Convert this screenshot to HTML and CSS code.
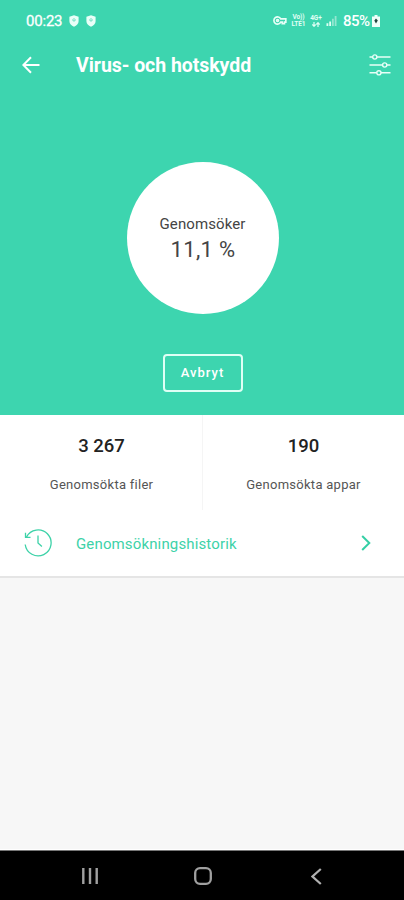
FILE: index.html
```html
<!DOCTYPE html>
<html lang="sv">
<head>
<meta charset="utf-8">
<title>Virus- och hotskydd</title>
<link rel="stylesheet" href="styles.css">
</head>
<body>
<div class="screen">
  <header class="hero">
    <div class="status">
      <span class="clock">00:23</span>
      <svg class="shield" width="10" height="12" viewBox="0 0 10 12"><path d="M5 .3 9.6 1.8V6c0 2.8-2 4.7-4.6 5.8C2.400 10.700.4 8.800.4 6V1.800Z" fill="#e9fff8"/><path d="M3 4.500 5 6.400 7 4.500M5 3v3" fill="none" stroke="#74dfc4" stroke-width="1"/></svg>
      <svg class="shield second" width="10" height="12" viewBox="0 0 10 12"><path d="M5 .3 9.6 1.8V6c0 2.8-2 4.7-4.6 5.8C2.400 10.700.4 8.800.4 6V1.800Z" fill="#e9fff8"/><path d="M3 4.500 5 6.400 7 4.500M5 3v3" fill="none" stroke="#74dfc4" stroke-width="1"/></svg>
      <div class="signals">
        <svg width="14" height="9" viewBox="0 0 15 10" fill="none" stroke="#e9fff8" stroke-width="1.800"><path d="M8.300 3.200A4 4 0 1 0 8.300 6.800H10V8.500H12.500V6.800H14V3.200Z"/><circle cx="4.800" cy="5" r="1.100"/></svg>
        <span class="net volte"><span>Vo))</span><span>LTE1</span></span>
        <span class="net data"><span>4G+</span><svg width="8" height="5" viewBox="0 0 8 5" fill="none" stroke="#e0fff5" stroke-width="1.200"><path d="M2 0v4M.3 2.500 2 4.300 3.700 2.500M6 5V1M4.300 2.500 6 .7 7.700 2.500"/></svg></span>
        <svg class="bars" width="11" height="10" viewBox="0 0 11 11"><path d="M0 8h2v3H0ZM3 6h2v5H3Z" fill="#e0fff5"/><path d="M6 3h2v8H6ZM9 0h2v11H9Z" fill="#93e7d0"/></svg>
        <span class="percent">85%</span>
        <svg width="8" height="12" viewBox="0 0 8 12"><path d="M2.500 0h3v1.500H8V12H0V1.500h2.500Z" fill="#f0fffa"/><path d="M4 3.500 2.300 5.500 4 8.500 5.800 5.500Z" fill="#24463f"/></svg>
      </div>
    </div>
    <div class="toolbar">
      <svg width="18" height="18" viewBox="0 0 18 18" fill="none" stroke="#fff" stroke-width="2"><path d="M17.500 9H1.800M9 1.300 1.300 9 9 16.700"/></svg>
      <h1>Virus- och hotskydd</h1>
      <svg class="sliders" width="22" height="22" viewBox="0 0 22 22" fill="none" stroke="#e9fff8" stroke-width="1.400"><path d="M.5 3h3.200M8 3h13.500M.5 11h13M17.800 11h3.700M.5 18.800h7.300M12 18.800h9.500"/><circle cx="5.800" cy="3" r="2.100"/><circle cx="15.700" cy="11" r="2.100"/><circle cx="9.900" cy="18.800" r="2.100"/></svg>
    </div>
    <div class="progress">
      <span class="label">Genomsöker</span>
      <span class="value">11,1 %</span>
    </div>
    <button class="cancel">Avbryt</button>
  </header>
  <main>
    <section class="stats">
      <div class="stat"><strong>3 267</strong><span class="files">Genomsökta filer</span></div>
      <div class="stat"><strong>190</strong><span class="apps">Genomsökta appar</span></div>
    </section>
    <a class="history">
      <svg width="28" height="28" viewBox="0 0 28 28" fill="none" stroke="#3dd2a8" stroke-width="1.300"><path d="M2.500 8A13 13 0 1 1 1.200 15.500M1.500 3.800V8.300H6.500M14 6.500V14l3.900 3.500"/></svg>
      <span>Genomsökningshistorik</span>
      <svg class="chevron" width="10" height="16" viewBox="0 0 10 16" fill="none" stroke="#35cfa5" stroke-width="2"><path d="M1.200 1 8.300 8 1.200 15"/></svg>
    </a>
  </main>
  <nav>
    <svg width="16" height="16" viewBox="0 0 16 16" stroke="#a0a0a0" stroke-width="2.400"><path d="M1.300 0v16M8 0v16M14.700 0v16"/></svg>
    <svg class="home" width="18" height="18" viewBox="0 0 18 18" fill="none" stroke="#a0a0a0" stroke-width="2.300"><rect x="1.200" y="1.200" width="15.600" height="15.600" rx="4.800"/></svg>
    <svg width="11" height="17" viewBox="0 0 11 17" fill="none" stroke="#b0b0b0" stroke-width="2.200"><path d="M9.800 1 1.500 8.500l8.300 7.500"/></svg>
  </nav>
</div>
</body>
</html>
```
FILE: styles.css
```css
* { box-sizing: border-box; }
body { margin: 0; font-family: Roboto, "Liberation Sans", sans-serif; }
svg { display: block; flex: none; }
.screen { width: 404px; height: 900px; display: flex; flex-direction: column; background: #f7f7f7; overflow: hidden; }
.hero { height: 415px; flex: none; background: #3dd5af; display: flex; flex-direction: column; align-items: center; color: #fff; }
.status { width: 100%; height: 41px; padding: 0 24px 0 26px; display: flex; align-items: center; }
.clock { width: 43px; font-size: 15px; letter-spacing: -.2px; white-space: nowrap; -webkit-text-stroke: .3px #fff; }
.second { margin-left: 7px; }
.signals { margin-left: auto; display: flex; align-items: center; }
.net { display: flex; flex-direction: column; align-items: center; font-size: 6.5px; font-weight: 700; color: #e0fff5; }
.net > span { display: block; height: 6px; line-height: 6px; }
.net > * + * { margin-top: 1px; }
.volte { width: 15px; margin-left: 4px; letter-spacing: -.1px; }
.data { width: 14px; margin-left: 3px; }
.bars { margin-left: 3px; }
.percent { width: 28px; margin: 0 1px 0 6px; font-size: 15px; font-weight: 500; letter-spacing: -.5px; white-space: nowrap; }
.toolbar { width: 100%; height: 48px; padding: 0 13px 0 22px; display: flex; align-items: center; }
h1 { margin: 1px 0 0 36px; font-size: 19.5px; line-height: 24px; font-weight: 700; letter-spacing: -.05px; white-space: nowrap; }
.sliders { margin-left: auto; }
.progress { width: 152px; height: 152px; margin: 73px 0 0 1px; border-radius: 50%; background: #fff; display: flex; flex-direction: column; align-items: center; padding-top: 51px; color: #444; }
.label { font-size: 15px; line-height: 22px; letter-spacing: .1px; }
.value { margin: 1px 0 0 1px; font-size: 22px; line-height: 28px; font-weight: 400; letter-spacing: .3px; }
.cancel { width: 80px; height: 38px; margin: 40px 0 0 1px; padding: 0; border: 2.5px solid #dffff5; border-radius: 4px; background: none; color: #fff; font: 500 13px/18px Roboto, sans-serif; letter-spacing: 1px; }
main { height: 163px; flex: none; background: #fff; border-bottom: 2px solid #e5e5e5; }
.stats { height: 95px; display: flex; }
.stat { width: 50%; display: flex; flex-direction: column; align-items: center; padding: 19px 0 0 1px; color: #555; }
.stat + .stat { padding-left: 0; border-left: 1px solid #f5f5f5; }
strong { font-size: 18.500px; line-height: 24px; font-weight: 500; color: #222; }
.stat span { margin-top: 18px; font-size: 13px; line-height: 18px; letter-spacing: .27px; }
.history { height: 66px; padding: 0 33px 0 24px; display: flex; align-items: center; color: #3dd2a8; font-size: 15px; letter-spacing: .14px; }
.history span { margin: 2px 0 0 24px; }
.chevron { margin-left: auto; }
nav { height: 50px; margin-top: auto; background: #000; border-top: 1px solid #777; box-shadow: 0 -1px #fff; display: flex; align-items: center; justify-content: space-between; padding: 1px 82px 0; }
.home { margin-right: 4px; }
```
